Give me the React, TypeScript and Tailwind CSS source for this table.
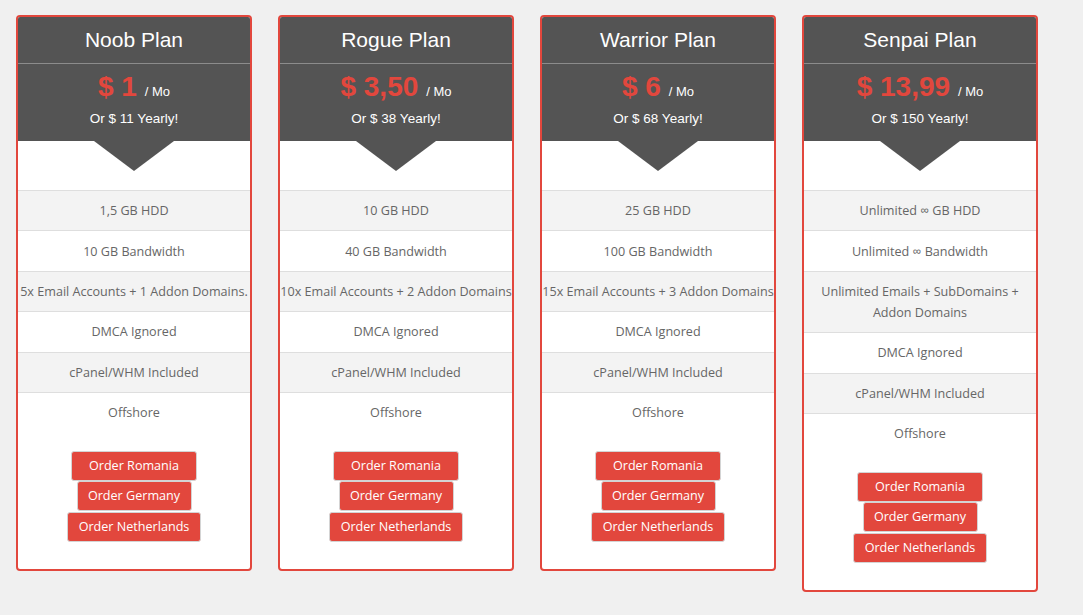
import React from 'react';

type Plan = {
  name: string;
  price: string;
  yearly: string;
  features: string[];
};

const plans: Plan[] = [
  {
    name: 'Noob Plan',
    price: '$ 1',
    yearly: 'Or $ 11 Yearly!',
    features: ['1,5 GB HDD', '10 GB Bandwidth', '5x Email Accounts + 1 Addon Domains.', 'DMCA Ignored', 'cPanel/WHM Included', 'Offshore'],
  },
  {
    name: 'Rogue Plan',
    price: '$ 3,50',
    yearly: 'Or $ 38 Yearly!',
    features: ['10 GB HDD', '40 GB Bandwidth', '10x Email Accounts + 2 Addon Domains', 'DMCA Ignored', 'cPanel/WHM Included', 'Offshore'],
  },
  {
    name: 'Warrior Plan',
    price: '$ 6',
    yearly: 'Or $ 68 Yearly!',
    features: ['25 GB HDD', '100 GB Bandwidth', '15x Email Accounts + 3 Addon Domains', 'DMCA Ignored', 'cPanel/WHM Included', 'Offshore'],
  },
  {
    name: 'Senpai Plan',
    price: '$ 13,99',
    yearly: 'Or $ 150 Yearly!',
    features: ['Unlimited ∞ GB HDD', 'Unlimited ∞ Bandwidth', 'Unlimited Emails + SubDomains + Addon Domains', 'DMCA Ignored', 'cPanel/WHM Included', 'Offshore'],
  },
];

const orders = [
  { label: 'Order Romania', cls: 'w-[126px]' },
  { label: 'Order Germany', cls: 'w-[115px]' },
  { label: 'Order Netherlands', cls: 'w-[134px] mt-[1px]' },
];

const PlanCard: React.FC<{ plan: Plan }> = ({ plan }) => (
  <div className="w-[236px] shrink-0 overflow-hidden rounded-[4px] border-2 border-[#e2473d] bg-white">
    <div className="bg-[#545454] font-['Liberation_Sans',Arial,sans-serif] text-white">
      <div className="flex h-[47px] items-center justify-center border-b border-[#8c8c8c] text-[21px]">
        {plan.name}
      </div>
      <div className="flex h-[77px] flex-col items-center pt-[8px]">
        <div className="flex items-baseline gap-[8px] leading-[30px]">
          <span className="text-[28px] font-bold text-[#e2473d]">{plan.price}</span>
          <span className="text-[13px]">/ Mo</span>
        </div>
        <div className="mt-[4px] text-[13.5px] leading-[16px]">{plan.yearly}</div>
      </div>
    </div>
    <div className="flex h-[49px] justify-center">
      <svg width="80" height="30" viewBox="0 0 80 30">
        <polygon points="0,0 80,0 40,30" fill="#545454" />
      </svg>
    </div>
    <div className="font-['Open_Sans',sans-serif] text-[12.6px] leading-[21px] text-[#666]">
      {plan.features.map((f, i) => {
        const wraps = f.length > 40;
        return (
          <div
            key={f}
            className={`border-t border-[#dedede] py-[9.2px] text-center ${wraps ? 'px-[8px]' : 'whitespace-nowrap'} ${i % 2 === 0 ? 'bg-[#f3f3f3]' : 'bg-white'}`}
          >
            {f}
          </div>
        );
      })}
    </div>
    <div className="flex flex-col items-center pt-[19px] pb-[27px] font-['Open_Sans',sans-serif]">
      {orders.map((o) => (
        <button
          key={o.label}
          className={`${o.cls} h-[30px] rounded-[3px] border border-[#d4d4d4] bg-[#e2473d] text-[12.6px] text-white`}
        >
          {o.label}
        </button>
      ))}
    </div>
  </div>
);

const App: React.FC = () => {
  return (
    <div className="min-h-screen w-full bg-[#f0f0f0]">
      <div className="flex items-start gap-[26px] pl-[16px] pt-[15px]">
        {plans.map((p) => (
          <PlanCard key={p.name} plan={p} />
        ))}
      </div>
    </div>
  );
};

export default App;
